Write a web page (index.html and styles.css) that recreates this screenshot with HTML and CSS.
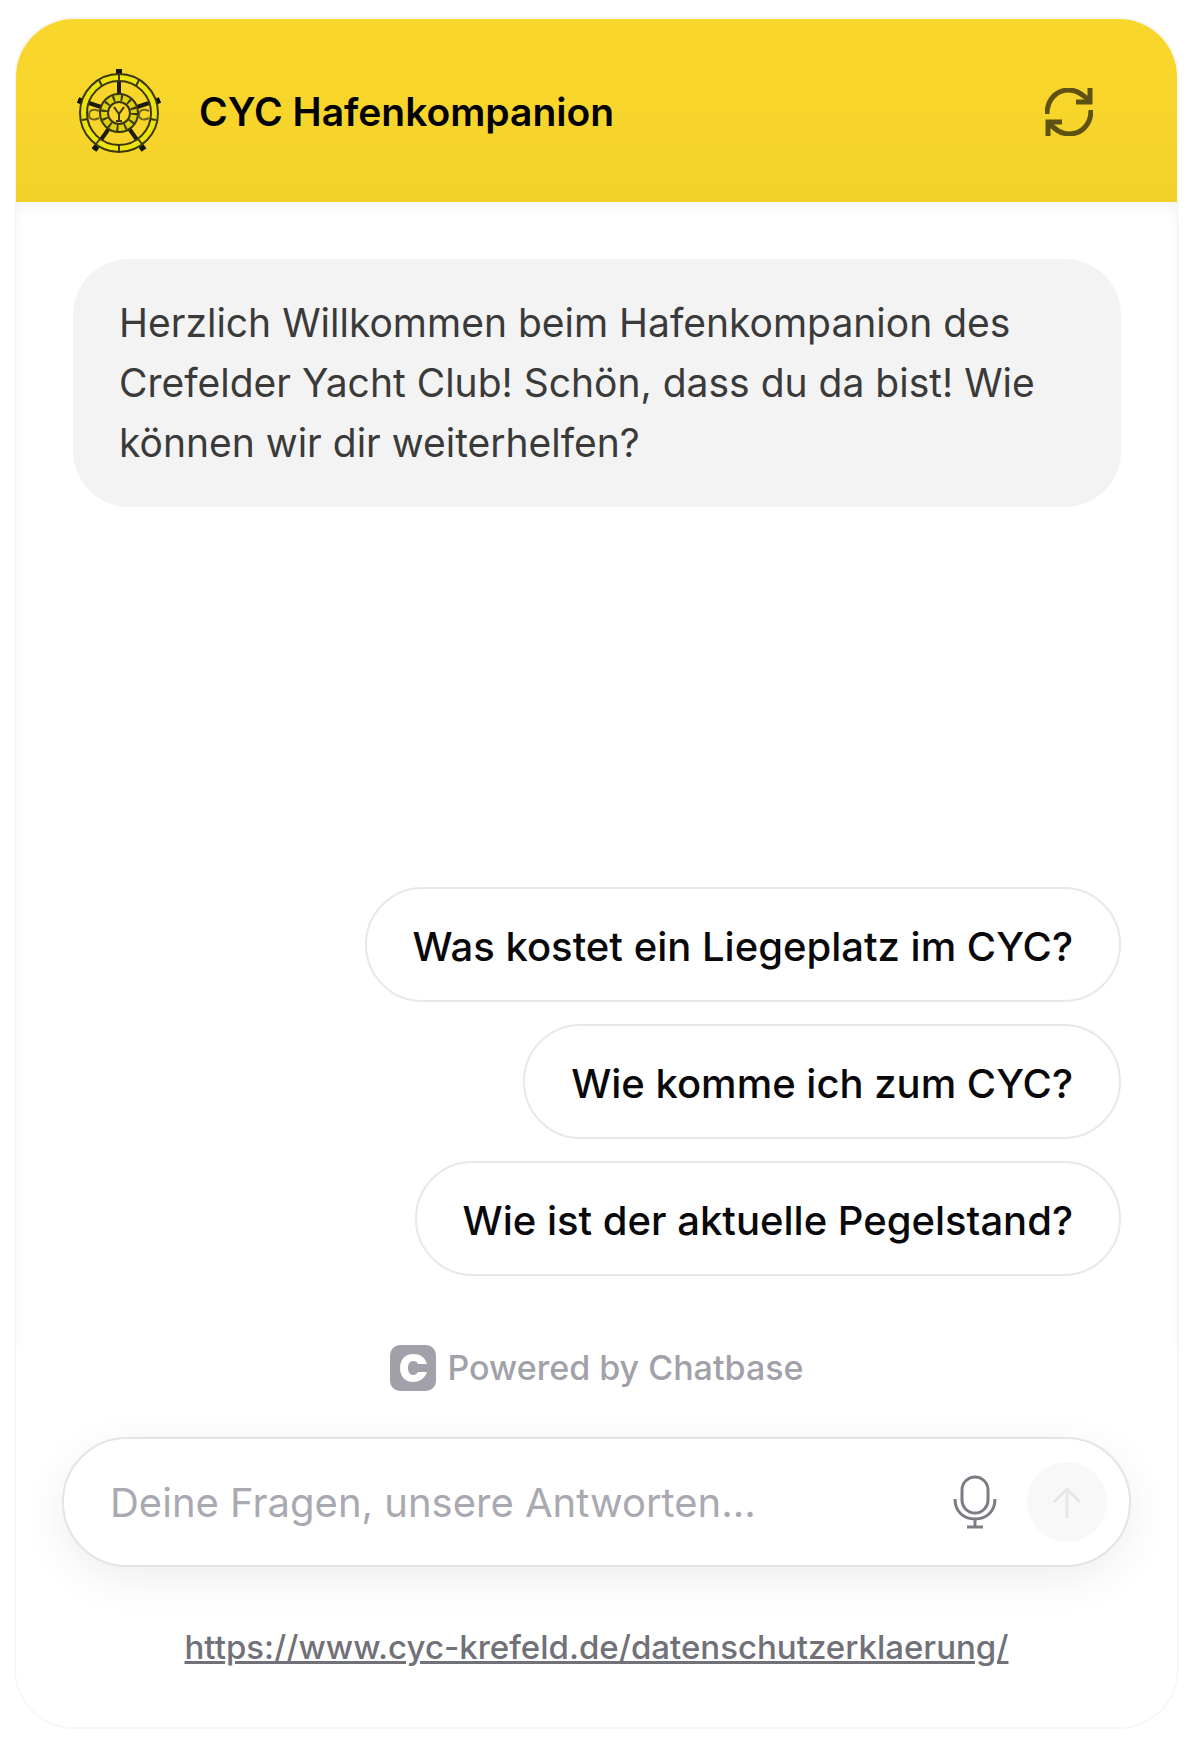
FILE: index.html
```html
<!DOCTYPE html>
<html lang="de">
<head>
  <meta charset="utf-8">
  <meta name="viewport" content="width=device-width, initial-scale=1">
  <title>CYC Hafenkompanion</title>
  <link rel="stylesheet" href="styles.css">
</head>
<body>
  <div class="chat">
    <header class="chat-header">
      <svg class="logo" viewBox="0 0 88 88" fill="none" stroke="#3a370c" aria-hidden="true">
        <!-- Steuerrad -->
        <path stroke="#1c1a08" stroke-width="4" d="M44 30V13M59 40l18-6M53 59l12 17M35 59L23 76M29 40L11 34"/>
        <path stroke="#111" stroke-width="6" d="M44 8V1M80 34l5-2M66 78l3 4M22 78l-3 4M8 34l-5-2"/>
        <circle cx="44" cy="45" r="36" stroke="#ece40c" stroke-width="6"/>
        <circle cx="44" cy="45" r="39" stroke-width="2"/>
        <circle cx="44" cy="45" r="32" stroke-width="2"/>
        <circle cx="44" cy="45" r="15" stroke="#dcd20e" stroke-width="7"/>
        <circle cx="44" cy="45" r="19" stroke-width="2"/>
        <circle cx="44" cy="45" r="11" stroke-width="2"/>
        <circle cx="44" cy="45" r="15" stroke-width="6" stroke-dasharray="2 6"/>
        <path stroke-width="2" d="M44 6v7M24 12l3 6M64 12l-3 6M7 52l6-1M81 52l-6-1M21 76l4-5M67 76l-4-5M44 77v7"/>
        <path stroke-width="2" d="M39 39l5 7 5-7M44 46v7M41 53h6"/>
        <path stroke-width="2" opacity=".7" d="M24 43c-7-3-10 0-10 4s4 6 10 3M74 43c-7-3-10 0-10 4s4 6 10 3"/>
      </svg>
      <h1 class="title">CYC Hafenkompanion</h1>
      <button class="refresh" type="button" aria-label="Chat neu starten">
        <svg viewBox="0 0 48 48" fill="none" stroke="currentColor" stroke-width="5">
          <path d="M2 26C2 12 11 2 24 2c9 0 15 5 21 12"/>
          <path d="M45 0v14H31"/>
          <path d="M46 22c0 14-9 24-22 24-9 0-15-5-21-12"/>
          <path d="M3 48V34h14"/>
        </svg>
      </button>
    </header>

    <main class="messages">
      <p class="bubble">Herzlich Willkommen beim Hafenkompanion des Crefelder Yacht Club! Schön, dass du da bist! Wie können wir dir weiterhelfen?</p>
      <div class="suggestions">
        <button class="suggestion" type="button">Was kostet ein Liegeplatz im CYC?</button>
        <button class="suggestion" type="button">Wie komme ich zum CYC?</button>
        <button class="suggestion" type="button">Wie ist der aktuelle Pegelstand?</button>
      </div>
    </main>

    <footer class="chat-footer">
      <div class="powered">
        <svg class="powered-icon" viewBox="0 0 46 46" aria-hidden="true">
          <rect width="46" height="46" rx="10" fill="#a1a1aa"/>
          <path d="M37 19C35 12 30 9 23 9c-8 0-13 6-13 14s5 14 13 14c7 0 12-4 14-10h-9c-1 2-3 3-5 3-3 0-5-3-5-7s2-7 5-7c3 0 4 1 5 3z" fill="#fff"/>
        </svg>
        <span>Powered by Chatbase</span>
      </div>
      <form class="composer">
        <input class="question" type="text" aria-label="Nachricht" placeholder="Deine Fragen, unsere Antworten...">
        <button class="mic" type="button" aria-label="Spracheingabe">
          <svg viewBox="0 0 44 54" fill="none" stroke="currentColor" stroke-width="3">
            <rect x="9" y="2" width="26" height="36" rx="13"/>
            <path d="M2 24c0 12 8 20 20 20s20-8 20-20M22 44v8M14 52h16"/>
          </svg>
        </button>
        <button class="send" type="button" aria-label="Senden">
          <svg viewBox="0 0 28 32" fill="none" stroke="currentColor" stroke-width="3">
            <path d="M14 32V3M1 16L14 3l13 13"/>
          </svg>
        </button>
      </form>
      <a class="privacy" href="https://www.cyc-krefeld.de/datenschutzerklaerung/">https://www.cyc-krefeld.de/datenschutzerklaerung/</a>
    </footer>
  </div>
</body>
</html>
```
FILE: styles.css
```css
* {
  box-sizing: border-box;
}
body {
  margin: 0;
  padding: 19px 17px 12px 16px;
  min-height: 100vh;
  display: flex;
  background: #fff;
  font-family: Inter, "Liberation Sans", sans-serif;
  font-size: 40px;
  line-height: 60px;
}
button {
  font: inherit;
  border: 0;
  padding: 0;
  background: none;
  cursor: pointer;
}
svg {
  display: block;
}
.chat {
  flex: 1;
  min-width: 0;
  display: flex;
  flex-direction: column;
  border-radius: 58px;
  overflow: hidden;
  background: #fff;
  box-shadow: 0 0 0 2px #f7f7f7;
}
.chat-header {
  display: flex;
  align-items: center;
  gap: 36px;
  height: 183px;
  padding: 2px 84px 0 59px;
  background: linear-gradient(#f8d62c, #f8d52b 50%, #f1d129);
}
.logo {
  width: 88px;
  height: 88px;
}
.title {
  flex: 1;
  margin: 0;
  font-size: 39px;
  font-weight: 600;
  color: #000;
}
.refresh {
  color: #5e5114;
}
.refresh svg {
  width: 48px;
  height: 48px;
}
.messages {
  flex: 1;
  display: flex;
  flex-direction: column;
  justify-content: space-between;
  padding: 57px 56px 69px 57px;
  box-shadow: inset 0 16px 16px -12px #f3f3f3, inset 10px 0 8px -8px #f7f7f7, inset -10px 0 8px -8px #f7f7f7;
}
.bubble {
  margin: 0;
  padding: 34px 46px;
  border-radius: 56px;
  background: #f3f3f3;
  color: #3a3a3a;
  font-size: 39px;
}
.suggestions {
  display: flex;
  flex-direction: column;
  align-items: flex-end;
  gap: 22px;
}
.suggestion {
  padding: 28px 46px 23px;
  border: 2px solid #e8e8ea;
  border-radius: 58px;
  background: #fff;
  color: #09090b;
  font-weight: 500;
}
.chat-footer {
  display: flex;
  flex-direction: column;
  align-items: center;
  padding: 0 46px 57px;
  font-size: 34px;
  line-height: 46px;
  background: #fff;
}
.powered {
  display: flex;
  gap: 12px;
  color: #a1a1aa;
  font-weight: 500;
}
.powered-icon {
  width: 46px;
  height: 46px;
}
.composer {
  align-self: stretch;
  display: flex;
  align-items: center;
  gap: 30px;
  margin: 46px 0 57px;
  padding: 23px 22px 23px 46px;
  border: 2px solid #e4e4e7;
  border-radius: 65px;
  background: #fff;
  box-shadow: 0 12px 44px rgba(0, 0, 0, 0.07);
}
.question {
  flex: 1;
  min-width: 0;
  padding: 2px 0 0;
  border: 0;
  outline: 0;
  background: none;
  font: inherit;
  font-size: 40px;
  line-height: 60px;
}
.question::placeholder {
  color: #a9a9b2;
  opacity: 1;
}
.mic {
  color: #7c7c85;
}
.mic svg {
  width: 44px;
  height: 54px;
}
.send {
  display: grid;
  place-items: center;
  width: 80px;
  height: 80px;
  border-radius: 50%;
  background: #f8f8f8;
  color: #e6e6e8;
}
.send svg {
  width: 28px;
  height: 32px;
}
.privacy {
  color: #71717a;
  font-size: 33px;
  font-weight: 500;
}
```
